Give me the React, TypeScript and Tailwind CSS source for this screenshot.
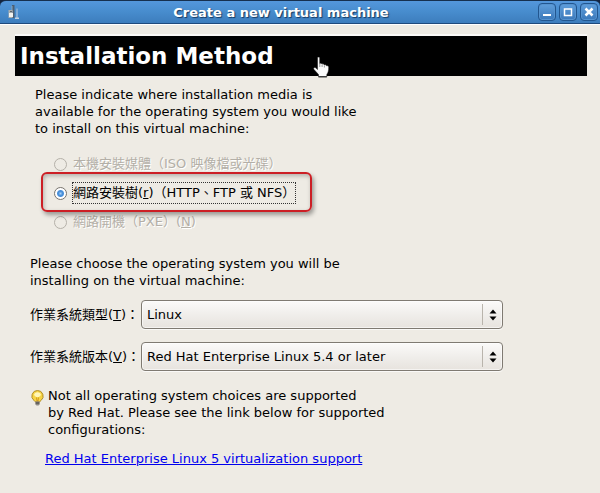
import { useState } from "react";
import type { ReactNode } from "react";

const methods = [
  {
    id: "local",
    label: <>本機安裝媒體（ISO 映像檔或光碟）</>,
    disabled: true,
  },
  {
    id: "tree",
    label: (
      <>
        網路安裝樹(<u className="underline-offset-1">r</u>)（HTTP、FTP 或 NFS）
      </>
    ),
    disabled: false,
  },
  {
    id: "pxe",
    label: (
      <>
        網路開機（PXE）(<u className="underline-offset-1">N</u>)
      </>
    ),
    disabled: true,
  },
];

function TitleButton({ label, children }: { label: string; children: ReactNode }) {
  return (
    <button
      type="button"
      aria-label={label}
      className="flex h-[18px] w-[18px] items-center justify-center rounded-[4px] border border-[#22568f] bg-linear-to-b from-[#5f9edb] to-[#3a78ba] shadow-[inset_0_0_0_1px_#5593d0]"
    >
      <svg width="10" height="10" viewBox="0 0 10 10" fill="none" stroke="#fff" strokeWidth="2">
        {children}
      </svg>
    </button>
  );
}

function SelectRow({
  id,
  label,
  hotkey,
  options,
}: {
  id: string;
  label: string;
  hotkey: string;
  options: string[];
}) {
  return (
    <div className="flex items-center">
      <label htmlFor={id} className="w-[111px] shrink-0 whitespace-nowrap">
        {label}(<u className="underline-offset-1">{hotkey}</u>)：
      </label>
      <div className="relative w-[362px]">
        <select
          id={id}
          className="block h-[29px] w-full appearance-none rounded-[4px] border border-[#7f7a72] bg-linear-to-b from-[#fbfaf9] via-[#f0eeeb] to-[#e7e3de] pr-8 pl-[5px] text-black shadow-[inset_0_0_0_1px_#ffffff90,0_1px_0_#faf9f7]"
        >
          {options.map((option) => (
            <option key={option}>{option}</option>
          ))}
        </select>
        <div className="pointer-events-none absolute inset-y-1 right-0 flex w-[21px] items-center justify-center border-l border-[#b9b4ac]">
          <svg width="8" height="12" viewBox="0 0 8 12" fill="#000" aria-hidden="true">
            <path d="M.5 4.500 4 .5l3.500 4zM.5 7.500h7L4 11.500z" />
          </svg>
        </div>
      </div>
    </div>
  );
}

export default function App() {
  const [method, setMethod] = useState("tree");

  return (
    <div className="min-h-screen bg-[#14243f] font-['DejaVu_Sans','Noto_Sans_CJK_TC',sans-serif] text-[13px] leading-[17px] text-black">
      <header className="flex h-6 items-center rounded-t-[6px] border-t border-b border-t-[#16304f] border-b-[#1f4a7c] bg-linear-to-b from-[#5497dc] via-[#478ccd] to-[#3d7dbd] pr-[2px] pl-2">
        <div className="w-4 shrink-0">
          {/* machine icon */}
          <svg width="11" height="15" viewBox="0 0 11 15" aria-hidden="true">
            <path d="M4 0h2.500v13H4z" fill="#4d5f72" />
            <path d="M3.500 1h1v7h-1z" fill="#8aa5bd" />
            <path d="M.5 5h4v8h-4z" fill="#a9aeb0" />
            <path d="M1 8h4v4H1z" fill="#f2f2ee" />
            <path d="M2 6h2v1H2z" fill="#5b6670" />
            <path d="M8 3.500h2V13H8z" fill="#7fabd8" />
            <path d="M7 12.500h4v1.500H7z" fill="#c2d3e2" />
          </svg>
        </div>
        <div className="flex-1 text-center text-[13px] font-bold text-white [text-shadow:1px_1px_1px_#153a63]">
          Create a new virtual machine
        </div>
        <div className="flex gap-[3px]">
          <TitleButton label="Minimize">
            <path d="M1 8h8" />
          </TitleButton>
          <TitleButton label="Maximize">
            <path d="M1.500 2h7v6.500h-7z" strokeWidth="1.500" />
          </TitleButton>
          <TitleButton label="Close">
            <path d="m1.500 1.500 7 7m0-7-7 7" strokeWidth="2.500" />
          </TitleButton>
        </div>
      </header>

      <main className="min-h-[calc(100vh-24px)] border-t border-white bg-[#eeebe4] pt-[9px] pr-[13px] pb-4 pl-[15px]">
        <div className="relative flex h-[42px] items-center border-t-2 border-[#fbfaf8] bg-black px-[5px]">
          <h1 className="text-[23px] leading-[28px] font-bold text-white">Installation Method</h1>
          {/* hand pointer */}
          <svg
            className="absolute top-5 left-[298px]"
            width="17"
            height="22"
            viewBox="0 0 17 22"
            aria-hidden="true"
          >
            <path
              d="M4.500 2c0-1.300 2.200-1.300 2.200 0v5.500c.8-.6 2-.3 2.300.6.800-.5 2-.2 2.300.8 1-.4 2.200 0 2.400 1 1-.4 2 .2 2 1.300 0 3.200-.4 5-1.900 7.300v2.300H5.500v-2.300L1 13.500C0 11.800 1.300 10.800 2.600 11.800l1.900 1.700z"
              fill="#fafafa"
              stroke="#111"
              strokeWidth=".5"
            />
            <path d="M6.800 7.500V11M9.100 8.500V11M11.400 9.500v2" stroke="#555" strokeWidth=".6" />
            <path d="M5.500 20.800h8.300" stroke="#111" />
          </svg>
        </div>

        <p className="mt-[10px] ml-5 max-w-[330px]">
          Please indicate where installation media is available for the operating system you would
          like to install on this virtual machine:
        </p>

        <fieldset className="relative mt-4 ml-[39px] flex flex-col gap-[7px]">
          {methods.map((item) => (
            <label
              key={item.id}
              className={`flex h-[22px] w-fit items-center ${
                item.disabled ? "text-[#b3afa7] [text-shadow:1px_1px_0_#fff]" : ""
              }`}
            >
              <input
                type="radio"
                name="method"
                checked={method === item.id}
                disabled={item.disabled}
                onChange={() => setMethod(item.id)}
                className="mr-[5px] h-[13px] w-[13px] appearance-none rounded-full border border-[#77736c] bg-white checked:bg-[radial-gradient(circle,#a9d0f5_0,#4a90d9_2px,#4a90d9_3px,#fff_4px)] disabled:border-[#b5b1a9] disabled:bg-[#eeebe4]"
              />
              <span
                className={`whitespace-nowrap border border-dotted leading-[20px] ${
                  item.disabled ? "border-transparent" : "border-[#333]"
                }`}
              >
                {item.label}
              </span>
            </label>
          ))}
          {/* red highlight round the chosen method */}
          <div className="pointer-events-none absolute top-[19px] -left-[13px] h-[40px] w-[271px] rounded-[6px] border-2 border-[#cc1f25] shadow-[2px_3px_4px_#00000059,inset_1px_2px_4px_#00000040]" />
        </fieldset>

        <p className="mt-[22px] ml-[15px] max-w-[330px]">
          Please choose the operating system you will be installing on the virtual machine:
        </p>

        <div className="mt-[11px] ml-[15px] flex flex-col gap-[13px]">
          <SelectRow id="os-type" label="作業系統類型" hotkey="T" options={["Linux"]} />
          <SelectRow
            id="os-version"
            label="作業系統版本"
            hotkey="V"
            options={["Red Hat Enterprise Linux 5.4 or later"]}
          />
        </div>

        <div className="mt-4 ml-4 flex gap-[4px]">
          <svg className="mt-[3px]" width="13" height="16" viewBox="0 0 13 16" aria-hidden="true">
            <path
              d="M6.500.5a5.600 5.600 0 0 0-3.500 10l1.200 1.200h4.600l1.200-1.200a5.600 5.600 0 0 0-3.500-10z"
              fill="#f7d445"
              stroke="#b08d2a"
            />
            <path d="M3 5a3.600 3.600 0 0 1 7 0L8 7H5z" fill="#fff6b8" />
            <path d="M5.500 7.500 6 11h1l.5-3.500" fill="none" stroke="#c98b14" strokeWidth=".8" />
            <path d="M4.500 11.500h4v3l-1 1h-2l-1-1z" fill="#8d8a85" />
            <path d="M4.500 13h4" stroke="#3f3d3a" />
          </svg>
          <p>
            Not all operating system choices are supported
            <br />
            by Red Hat. Please see the link below for supported
            <br />
            configurations:
          </p>
        </div>

        <a href="#support" className="mt-3 ml-[30px] inline-block text-[#0000ee] underline">
          Red Hat Enterprise Linux 5 virtualization support
        </a>
      </main>
    </div>
  );
}
